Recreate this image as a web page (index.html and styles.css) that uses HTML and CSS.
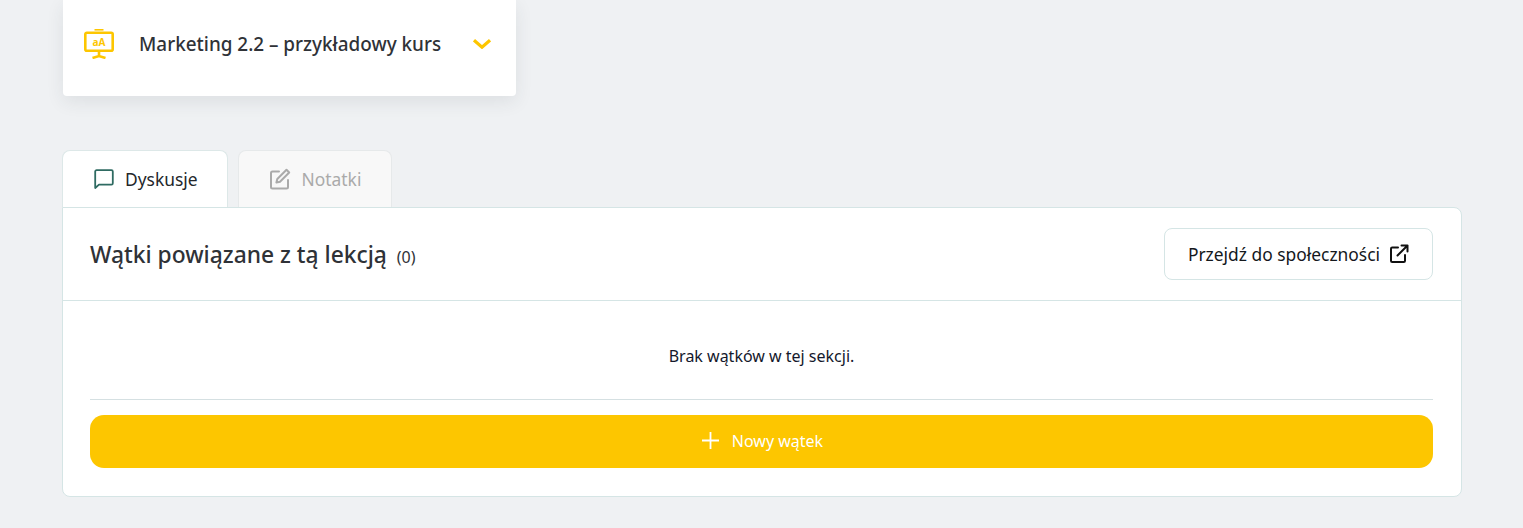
FILE: index.html
```html
<!DOCTYPE html>
<html lang="pl">
<head>
  <meta charset="UTF-8" />
  <title>Marketing 2.2 – przykładowy kurs</title>
  <link rel="stylesheet" href="styles.css">
</head>

<body>
  <div class="course-card">
    <svg class="course-icon" width="30" height="30" viewBox="0 0 30 30" fill="none" stroke="#fdc600" stroke-width="2.6">
      <path d="M10.5 .8h9" stroke-width="1.6" />
      <rect x="1.3" y="3.8" width="27.4" height="18" rx="1.5" />
      <path d="M15 22v5.5M8.5 29l6.5-2 6.5 2" />
      <text x="15" y="16.5" text-anchor="middle" class="course-icon-text">aA</text>
    </svg>
    <span class="course-title">Marketing 2.2 – przykładowy kurs</span>
    <svg class="course-chevron" width="18" height="10" viewBox="0 0 18 10" fill="none" stroke="#fdc600" stroke-width="3.2">
      <path d="M1 1.200l8 7 8-7" />
    </svg>
  </div>

  <div class="tabs">
    <div class="tab active">
      <svg width="22" height="22" viewBox="0 0 22 22" fill="none" stroke="#2f6b62" stroke-width="1.8" stroke-linejoin="round">
        <path d="M2.2 20V3.6c0-.9.6-1.400 1.400-1.400h14.800c.8 0 1.400.5 1.400 1.400v11.600c0 .9-.6 1.400-1.400 1.400H6z" />
      </svg>
      <span>Dyskusje</span>
    </div>
    <div class="tab">
      <svg width="22" height="22" viewBox="0 0 22 22" fill="none" stroke="#aaa" stroke-width="2" stroke-linecap="round" stroke-linejoin="round">
        <path d="M10 3.500H3.500c-1 0-1.500.6-1.500 1.500v14c0 1 .6 1.500 1.500 1.500h14c1 0 1.500-.6 1.500-1.500v-7" />
        <path d="M17.500 1.800l2.700 2.700L11 13.700l-3.600.9.9-3.600z" />
      </svg>
      <span>Notatki</span>
    </div>
  </div>

  <div class="panel">
    <div class="panel-header">
      <h2 class="panel-title">Wątki powiązane z tą lekcją <small>(0)</small></h2>
      <a class="community-btn">
        <span>Przejdź do społeczności</span>
        <svg width="20" height="20" viewBox="0 0 20 20" fill="none" stroke="#111" stroke-width="2" stroke-linecap="round" stroke-linejoin="round">
          <path d="M9 3.500H3.200C2.400 3.500 2 4 2 4.700v12c0 .8.4 1.300 1.200 1.300h11.600c.8 0 1.200-.5 1.200-1.300V11" />
          <path d="M12.500 1.500h6v6M18.500 1.500L8.500 11.500" />
        </svg>
      </a>
    </div>
    <div class="panel-body">
      <p class="empty-text">Brak wątków w tej sekcji.</p>
      <button class="new-thread">
        <svg width="17" height="17" viewBox="0 0 17 17" stroke="#fff" stroke-width="1.8">
          <path d="M8.500 0v17M0 8.500h17" />
        </svg>
        <span>Nowy wątek</span>
      </button>
    </div>
  </div>
</body>
</html>
```

FILE: styles.css
```css
body {
  font-family: "Noto Sans", sans-serif;
  background: #eff1f3;
  color: #2f3237;
  margin: 0;
  padding: 0 61px 0 62px;
}

/* Karta kursu */
.course-card {
  display: flex;
  align-items: center;
  width: 453px;
  height: 96px;
  margin-left: 1px;
  box-sizing: border-box;
  padding: 0 25px 8px 21px;
  background: #fff;
  border-radius: 0 0 4px 4px;
  box-shadow: 0 6px 18px rgba(40, 50, 70, 0.09);
}
.course-icon {
  flex: none;
}
.course-icon-text {
  font-size: 10px;
  font-weight: 700;
  fill: #fdc600;
  stroke: none;
}
.course-title {
  flex: 1;
  margin-left: 25px;
  font-size: 18.9px;
  font-weight: 500;
}

/* Zakładki */
.tabs {
  display: flex;
  gap: 11px;
  margin-top: 54px;
}
.tab {
  display: flex;
  align-items: center;
  gap: 11px;
  height: 57px;
  box-sizing: border-box;
  padding: 0 30px;
  background: #f8f8f8;
  border: 1px solid #e6e9ea;
  border-bottom: none;
  border-radius: 8px 8px 0 0;
  font-size: 17.4px;
  color: #aaa;
}
.tab.active {
  gap: 10px;
  padding-right: 29px;
  margin-right: -1px;
  background: #fff;
  border-color: #dde8e8;
  color: #23272b;
}

/* Panel */
.panel {
  background: #fff;
  border: 1px solid #d5e5e5;
  border-radius: 0 8px 8px 8px;
  height: 290px;
  box-sizing: border-box;
}
.panel-header {
  display: flex;
  align-items: center;
  justify-content: space-between;
  height: 93px;
  box-sizing: border-box;
  padding: 0 28px 0 27px;
  border-bottom: 1px solid #d5e5e5;
}
.panel-title {
  margin: 0;
  font-size: 22.8px;
  font-weight: 500;
}
.panel-title small {
  margin-left: 4px;
  font-size: 16px;
  font-weight: 400;
}
.community-btn {
  display: flex;
  align-items: center;
  gap: 9px;
  height: 52px;
  box-sizing: border-box;
  padding: 0 23px;
  border: 1px solid #d5e5e5;
  border-radius: 8px;
  font-size: 17.4px;
  color: #14181c;
}
.panel-body {
  padding: 0 28px 0 27px;
}
.empty-text {
  margin: 0 0 15px;
  padding-top: 44px;
  box-sizing: border-box;
  border-bottom: 1px solid #d5e0e2;
  height: 99px;
  text-align: center;
  font-size: 16px;
  line-height: 22px;
  color: #14182c;
}
.new-thread {
  display: flex;
  align-items: center;
  justify-content: center;
  gap: 13px;
  width: 100%;
  height: 53px;
  padding: 0 0 2px 2px;
  border: none;
  border-radius: 14px;
  background: #fdc600;
  color: #fff;
  font-family: inherit;
  font-size: 16px;
  cursor: pointer;
}
```
